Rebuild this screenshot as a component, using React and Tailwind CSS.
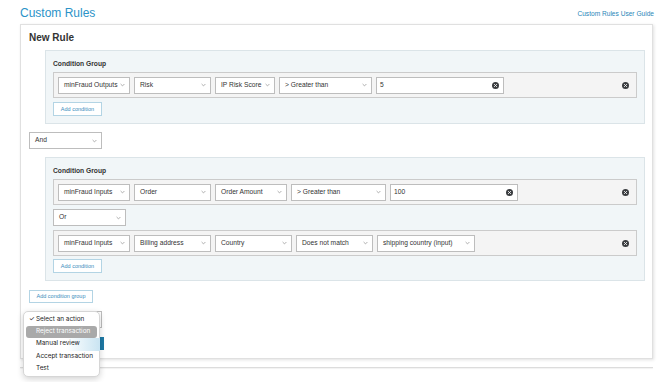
import React from "react";

function Chevron() {
  return (
    <svg width="5" height="4" viewBox="0 0 5 4" className="shrink-0">
      <polyline points="0.6,1 2.5,2.9 4.4,1" fill="none" stroke="#8c8c8c" strokeWidth="0.7" />
    </svg>
  );
}

function XIcon({ className = "" }) {
  return (
    <svg width="7" height="7" viewBox="0 0 8 8" className={`shrink-0 ${className}`}>
      <circle cx="4" cy="4" r="4" fill="#3b3d40" />
      <path d="M2.6 2.6 L5.4 5.4 M5.4 2.6 L2.6 5.4" stroke="#fff" strokeWidth="0.9" strokeLinecap="round" />
    </svg>
  );
}

function Select({ w, children }) {
  return (
    <div className={`flex items-center justify-between h-[17px] shrink-0 bg-white border border-[#bdbdbd] pl-[5px] pr-[4px] text-[6.7px] text-[#333] ${w}`}>
      <span className="whitespace-nowrap">{children}</span>
      <Chevron />
    </div>
  );
}

function ValueInput({ w, value }) {
  return (
    <div className={`flex items-center justify-between h-[17px] shrink-0 bg-white border border-[#bdbdbd] pl-[3px] pr-[4px] text-[6.7px] text-[#333] ${w}`}>
      <span>{value}</span>
      <XIcon />
    </div>
  );
}

function Row({ children }) {
  return (
    <div className="flex items-center h-[26px] bg-[#f4f4f4] border border-[#cbcbcb] pl-[4px] pr-[7px] gap-[4px]">
      {children}
      <XIcon className="ml-auto" />
    </div>
  );
}

function SmallButton({ w, children }) {
  return (
    <div className={`flex items-center justify-center bg-white border border-[#b3d4e4] text-[5.5px] text-[#3a8cbb] ${w}`}>
      {children}
    </div>
  );
}

export default function App() {
  return (
    <div className="relative w-[670px] h-[382px] overflow-hidden bg-white font-['Liberation_Sans',Arial,sans-serif]">
      <div className="flex items-center justify-between h-[24px] pl-[20px] pr-[16px]">
        <h1 className="mt-[1px] text-[12px] leading-none text-[#2b93c8]">Custom Rules</h1>
        <a className="mt-[4px] text-[6.6px] text-[#2a86b8]">Custom Rules User Guide</a>
      </div>

      <div className="ml-[20px] w-[633px] h-[335px] border border-[#e0e0e0] bg-white px-[8px] pt-[8px] shadow-[1px_1px_3px_rgba(0,0,0,0.12)]">
        <h2 className="text-[10px] leading-[10px] font-bold text-[#333]">New Rule</h2>

        <div className="mt-[7px] ml-[16px] w-[600px] bg-[#f1f6f8] border border-[#dbe4e8] px-[7px] pt-[9px] pb-[7px]">
          <div className="text-[6.7px] leading-[8px] font-bold text-[#333]">Condition Group</div>
          <div className="mt-[4px]">
            <Row>
              <Select w="w-[72px]">minFraud Outputs</Select>
              <Select w="w-[77px]">Risk</Select>
              <Select w="w-[60px]">IP Risk Score</Select>
              <Select w="w-[93px]">&gt; Greater than</Select>
              <ValueInput w="w-[128px]" value="5" />
            </Row>
          </div>
          <div className="flex mt-[4px]">
            <SmallButton w="w-[49px] h-[14px]">Add condition</SmallButton>
          </div>
        </div>

        <div className="mt-[8px]">
          <Select w="w-[73px]">And</Select>
        </div>

        <div className="mt-[8px] ml-[16px] w-[600px] bg-[#f1f6f8] border border-[#dbe4e8] px-[7px] pt-[9px] pb-[7px]">
          <div className="text-[6.7px] leading-[8px] font-bold text-[#333]">Condition Group</div>
          <div className="mt-[4px]">
            <Row>
              <Select w="w-[72px]">minFraud Inputs</Select>
              <Select w="w-[77px]">Order</Select>
              <Select w="w-[72px]">Order Amount</Select>
              <Select w="w-[95px]">&gt; Greater than</Select>
              <ValueInput w="w-[128px]" value="100" />
            </Row>
          </div>
          <div className="mt-[4px]">
            <Select w="w-[73px]">Or</Select>
          </div>
          <div className="mt-[4px]">
            <Row>
              <Select w="w-[72px]">minFraud Inputs</Select>
              <Select w="w-[77px]">Billing address</Select>
              <Select w="w-[77px]">Country</Select>
              <Select w="w-[77px]">Does not match</Select>
              <Select w="w-[98px]">shipping country (input)</Select>
            </Row>
          </div>
          <div className="flex mt-[3px]">
            <SmallButton w="w-[49px] h-[14px]">Add condition</SmallButton>
          </div>
        </div>

        <div className="flex mt-[9px]">
          <SmallButton w="w-[64px] h-[13px]">Add condition group</SmallButton>
        </div>

        <div className="mt-[8px]">
          <Select w="w-[73px]">Select an action</Select>
        </div>

        <div className="mt-[9px] w-[75px] h-[13px] bg-[#1e79a5]" />
      </div>

      <div className="mt-[8px] ml-[20px] w-[633px] h-[1px] bg-[#dcdcdc] shadow-[0_1px_1px_rgba(0,0,0,0.06)]" />

      <div className="absolute left-[23px] top-[311px] w-[77px] h-[66px] rounded-[5px] bg-white border border-[#d6d6d6] shadow-[0_2px_6px_rgba(0,0,0,0.18)] px-[2px] pt-[2px] font-['Inter',sans-serif] text-[6.4px] text-[#222]">
        <div className="absolute left-[42px] top-[26px] w-[34px] h-[13px] bg-gradient-to-r from-[#ffffff] to-[#c9e4f2]" />
        <div className="relative flex items-center h-[12px] pl-[3px]">
          <span className="w-[7px] text-[6.4px]">✓</span>
          <span>Select an action</span>
        </div>
        <div className="relative flex items-center h-[12px] pl-[10px] rounded-[3px] bg-[#a9a9a9] text-white">Reject transaction</div>
        <div className="relative flex items-center h-[12.5px] pl-[10px]">Manual review</div>
        <div className="relative flex items-center h-[12.5px] pl-[10px]">Accept transaction</div>
        <div className="relative flex items-center h-[12.5px] pl-[10px]">Test</div>
      </div>
    </div>
  );
}
